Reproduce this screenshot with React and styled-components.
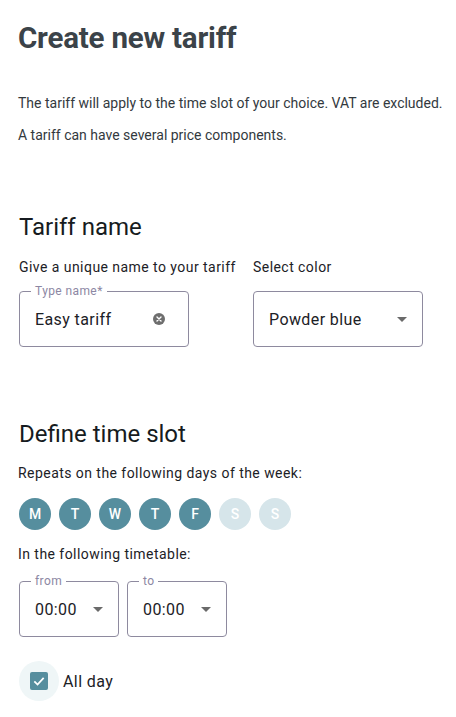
import React from "react";
import styled, { createGlobalStyle } from "styled-components";

const GlobalStyle = createGlobalStyle`
  html, body {
    margin: 0;
    padding: 0;
    background: #fff;
  }
  body {
    font-family: Roboto, "Liberation Sans", Arial, sans-serif;
    color: #1c2126;
  }
`;

const Page = styled.div`
  width: 456px;
  padding: 0 8px 0 18px;
  box-sizing: border-box;
`;

const Title = styled.h1`
  margin: 0;
  padding-top: 21px;
  font-size: 29.5px;
  font-weight: 700;
  line-height: 34px;
  color: #3b4349;
  letter-spacing: -0.2px;
`;

const Intro = styled.p`
  margin: 0;
  font-size: 14px;
  line-height: 32px;
  white-space: nowrap;
  color: #33393e;
  &:first-of-type {
    margin-top: 32px;
  }
`;

const SectionTitle = styled.h2`
  margin: ${(p) => p.$top}px 0 0 1px;
  font-size: 24px;
  font-weight: 400;
  line-height: 28px;
  color: #161b20;
`;

const Hint = styled.div`
  font-size: 14px;
  line-height: 20px;
  letter-spacing: 0.45px;
  color: #1c2126;
  margin-top: ${(p) => p.$top || 0}px;
`;

const NameGrid = styled.div`
  display: grid;
  grid-template-columns: 234px 170px;
  margin: 16px 0 0 1px;
  row-gap: 14px;
`;

const Field = styled.div`
  position: relative;
  width: ${(p) => p.$w}px;
  height: 56px;
  box-sizing: border-box;
  border: 1px solid #8e8a9f;
  border-radius: 4px;
  display: flex;
  align-items: center;
  padding: 0 15px;
  gap: 8px;
`;

const Legend = styled.span`
  position: absolute;
  top: -8px;
  left: 11px;
  padding: 0 4px;
  background: #fff;
  font-size: 12px;
  line-height: 14px;
  letter-spacing: 0.4px;
  color: #8c87a3;
`;

const Value = styled.span`
  flex: 1;
  font-size: 16px;
  color: #1c2126;
  letter-spacing: 0.4px;
`;

const Caret = styled.span`
  width: 0;
  height: 0;
  border-left: 5px solid transparent;
  border-right: 5px solid transparent;
  border-top: 5px solid #6a6a6a;
`;

const Clear = styled.svg`
  margin-right: 8px;
`;

const ClearIcon = () => (
  <Clear width="12" height="12" viewBox="0 0 12 12">
    <circle cx="6" cy="6" r="6" fill="#6e6e6e" />
    <path d="M4 4 L8 8 M8 4 L4 8" stroke="#fff" strokeWidth="1.4" strokeLinecap="round" />
  </Clear>
);

const DayRow = styled.div`
  display: flex;
  gap: 8px;
  margin: 15px 0 0 1px;
`;

const Day = styled.span`
  width: 32px;
  height: 32px;
  border-radius: 50%;
  display: flex;
  align-items: center;
  justify-content: center;
  background: ${(p) => (p.$on ? "#568e9e" : "#d6e5ea")};
  color: #fff;
  font-size: 14px;
  font-weight: 500;
`;

const TimeRow = styled.div`
  display: flex;
  gap: 8px;
  margin: 17px 0 0 1px;
`;

const CheckRow = styled.label`
  display: flex;
  align-items: center;
  margin: 24px 0 0 1px;
  gap: 4px;
`;

const CheckHalo = styled.span`
  width: 40px;
  height: 40px;
  border-radius: 50%;
  background: #eff6f7;
  display: flex;
  align-items: center;
  justify-content: center;
`;

const Box = styled.span`
  width: 18px;
  height: 18px;
  border-radius: 2px;
  background: #568e9e;
  display: flex;
  align-items: center;
  justify-content: center;
`;

const CheckLabel = styled.span`
  font-size: 16px;
  letter-spacing: 0.4px;
  color: #1c2126;
`;

const days = [
  ["M", true],
  ["T", true],
  ["W", true],
  ["T", true],
  ["F", true],
  ["S", false],
  ["S", false],
];

export default function App() {
  return (
    <Page>
      <GlobalStyle />
      <Title>Create new tariff</Title>
      <Intro>The tariff will apply to the time slot of your choice. VAT are excluded.</Intro>
      <Intro>A tariff can have several price components.</Intro>

      <SectionTitle $top={62}>Tariff name</SectionTitle>
      <NameGrid>
        <Hint>Give a unique name to your tariff</Hint>
        <Hint>Select color</Hint>
        <Field $w={170}>
          <Legend>Type name*</Legend>
          <Value>Easy tariff</Value>
          <ClearIcon />
        </Field>
        <Field $w={170}>
          <Value>Powder blue</Value>
          <Caret />
        </Field>
      </NameGrid>

      <SectionTitle $top={73}>Define time slot</SectionTitle>
      <Hint $top={15}>Repeats on the following days of the week:</Hint>
      <DayRow>
        {days.map(([d, on], i) => (
          <Day key={i} $on={on}>
            {d}
          </Day>
        ))}
      </DayRow>
      <Hint $top={14}>In the following timetable:</Hint>
      <TimeRow>
        <Field $w={100}>
          <Legend>from</Legend>
          <Value>00:00</Value>
          <Caret />
        </Field>
        <Field $w={100}>
          <Legend>to</Legend>
          <Value>00:00</Value>
          <Caret />
        </Field>
      </TimeRow>
      <CheckRow>
        <CheckHalo>
          <Box>
            <svg width="14" height="14" viewBox="0 0 24 24">
              <path d="M4 12.5 L9.5 18 L20 6.5" fill="none" stroke="#fff" strokeWidth="3" />
            </svg>
          </Box>
        </CheckHalo>
        <CheckLabel>All day</CheckLabel>
      </CheckRow>
    </Page>
  );
}
